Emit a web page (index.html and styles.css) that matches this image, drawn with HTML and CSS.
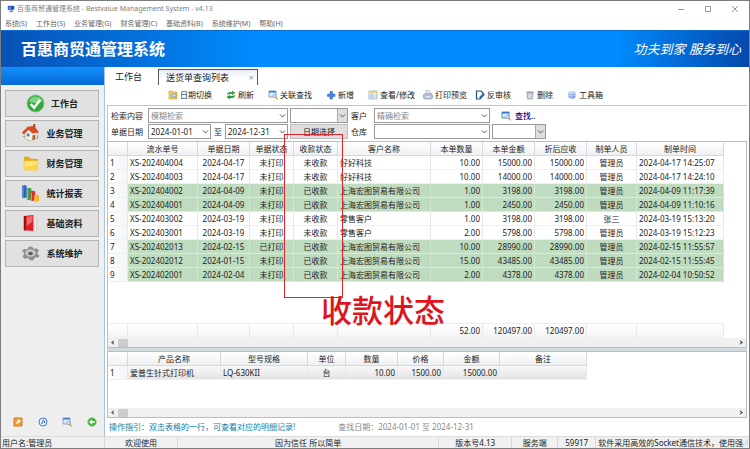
FILE: index.html
```
<!DOCTYPE html>
<html lang="zh-CN">

<head>
    <meta charset="UTF-8">
    <meta name="viewport" content="width=device-width, initial-scale=1.0">
    <title>百惠商贸通管理系统</title>
    <link rel="stylesheet" href="styles.css">
</head>

<body>
    <div class="window">
        <header class="titlebar">
            <svg class="app-icon" viewBox="0 0 10 10"><path d="M1 1h8v5H1z" fill="#1c4fb0"/><path d="M2 2h3v3H2z" fill="#5a96ea"/><path d="M4 6h3v2H4zM2 8h6v1H2z" fill="#8296b8"/></svg>
            <span class="window-title">百惠商贸通管理系统 - Bestvalue Management System - v4.13</span>
            <div class="window-buttons">
                <button type="button" aria-label="最小化"><svg viewBox="0 0 8 8"><path d="M1 4.500h6"/></svg></button>
                <button type="button" aria-label="最大化"><svg viewBox="0 0 8 8"><path d="M1.500 1.500h5v5h-5z"/></svg></button>
                <button type="button" aria-label="关闭"><svg viewBox="0 0 8 8"><path d="M1 1l6 6M7 1L1 7"/></svg></button>
            </div>
        </header>

        <nav class="menubar">
            <a href="#">系统(S)</a>
            <a href="#">工作台(S)</a>
            <a href="#">业务管理(G)</a>
            <a href="#">财务管理(C)</a>
            <a href="#">基础资料(B)</a>
            <a href="#">系统维护(M)</a>
            <a href="#">帮助(H)</a>
        </nav>

        <div class="banner">
            <h1>百惠商贸通管理系统</h1>
            <span class="slogan">功夫到家 服务到心</span>
        </div>

        <div class="body">
            <aside class="sidebar">
                <div class="sidebar-head"></div>
                <div class="nav-list">
                    <button type="button" class="nav-button">
                        <svg viewBox="0 0 20 20"><circle cx="10" cy="10" r="9" fill="#35a83e" stroke="#8bc58d"/><path d="M3 8a7.200 7 0 0 1 14 0q-7 3-14 0z" fill="#7dd27e"/><path d="M5 10.500l3.500 4L15 6" fill="none" stroke="#fff" stroke-width="2.600"/></svg>
                        <span>工作台</span>
                    </button>
                    <button type="button" class="nav-button">
                        <svg viewBox="0 0 20 20"><path d="M2 13l6 5 10-3v-3L9 10z" fill="#5f9f4b"/><path d="M4 9l5-4 8 4v6l-8 3-5-3z" fill="#f3eee6" stroke="#b9aa98" stroke-width=".5"/><path d="M1 9l6-6 7-1 5 7-7 1-4-4-5 5z" fill="#d94a1e"/><path d="M13 2V0h2v4z" fill="#9b3a20"/><path d="M6 10h3v3H6z" fill="#4582b8"/><path d="M12 12l3-1v5l-3 1z" fill="#a86436"/></svg>
                        <span>业务管理</span>
                    </button>
                    <button type="button" class="nav-button">
                        <svg viewBox="0 0 20 20"><path d="M3 4q0-1 1-1h5l1 2h7q1 0 1 1v10q0 1-1 1H4q-1 0-1-1z" fill="#e3ae1e"/><path d="M3 7h15v9q0 1-1 1H4q-1 0-1-1z" fill="#fbd449"/><path d="M4 8h13v3L4 14z" fill="#ffe57e"/></svg>
                        <span>财务管理</span>
                    </button>
                    <button type="button" class="nav-button">
                        <svg viewBox="0 0 20 20"><path d="M1 2l3-1 2 1v12l-3 1-2-1z" fill="#2f62c4"/><path d="M6 5l3-1 2 1v11l-3 1-2-1z" fill="#35a04a"/><path d="M10 8l3-1 2 1v9l-3 1-2-1z" fill="#d8332a"/><path d="M14 12l3-1 2 1v6l-3 1-2-1z" fill="#f1b62a"/><path d="M2 3v11M7 6v10M11 9v8M15 13v5" stroke="#fff" stroke-opacity=".45"/></svg>
                        <span>统计报表</span>
                    </button>
                    <button type="button" class="nav-button">
                        <svg viewBox="0 0 20 20"><path d="M13 3l4 1v14l-4 1z" fill="#cfcfcf"/><path d="M15 4v14" stroke="#fff"/><path d="M3 2l10-1v17l-10-1z" fill="#dc1f24"/><path d="M3 2l2 0v15.300L3 17z" fill="#8f1014"/><path d="M6 3l6-1v6l-6 5z" fill="#f06a68"/></svg>
                        <span>基础资料</span>
                    </button>
                    <button type="button" class="nav-button">
                        <svg viewBox="0 0 20 20"><path d="M8 3h4l.5 1.500 2 .8 2-.8 2.500 2.500-1.500 1.500V11l2 1-1.500 2.500-2.500-.5-1.500 1L13 17H9l-.5-1.500-2-.8-2.500 1L1.500 13 3 11.500V9L1 7.500 3.500 5l2 .8L7.500 4.500z" fill="#8d8d8d"/><ellipse cx="10" cy="9.500" rx="5.500" ry="4" fill="#c6c6c6"/><ellipse cx="10" cy="10" rx="2.500" ry="1.800" fill="#5d5d5d"/></svg>
                        <span>系统维护</span>
                    </button>
                </div>
                <div class="quick-links">
                    <button type="button" aria-label="编辑"><svg viewBox="0 0 10 10"><path d="M1 1h8v8H1z" fill="#f0a03a" stroke="#cf7a1a"/><path d="M3 7l1-3 2-2 2 2-2 2z" fill="#fff3d8"/></svg></button>
                    <button type="button" aria-label="帮助"><svg viewBox="0 0 10 10"><circle cx="5" cy="5" r="4" fill="#e8f0fc" stroke="#4a7cd0"/><path d="M5.500 2.500L4.500 5 3.500 7M6.500 4v2" fill="none" stroke="#2a5cb8"/></svg></button>
                    <button type="button" aria-label="查找"><svg viewBox="0 0 10 10"><path d="M1 1h7v6H1z" fill="#dcebfb" stroke="#7fa6d4"/><path d="M1 1h7v1.500H1z" fill="#3f7fd0"/><circle cx="6.500" cy="6" r="1.500" fill="#fff" stroke="#5d8fbe" stroke-width=".7"/><path d="M7.600 7.200L9.500 9.300" stroke="#c98332" stroke-width="1.200"/></svg></button>
                    <button type="button" aria-label="退出"><svg viewBox="0 0 10 10"><circle cx="5" cy="5" r="4.300" fill="#44b83c" stroke="#6fc768" stroke-width=".6"/><path d="M2 5l3-2.500V4h2.500v2H5v1.500z" fill="#fff"/></svg></button>
                </div>
            </aside>

            <main class="workspace">
                <div class="tabs">
                    <a href="#" class="tab">工作台</a>
                    <a href="#" class="tab active">送货单查询列表<span class="tab-close">×</span></a>
                </div>

                <div class="toolbar">
                    <button type="button"><svg viewBox="0 0 10 10"><path d="M1 1h3l1 1h4v7H1z" fill="#f3cb52" stroke="#d0a030" stroke-width=".6"/><path d="M4 4h4v3H4z" fill="#cfe2f7" stroke="#6f93bd" stroke-width=".7"/></svg>日期切换</button>
                    <button type="button"><svg viewBox="0 0 10 10"><path d="M1 5q0-3 3.500-3H6V.5L9.500 3 6 5.200V4H4.500Q3 4 1 5z" fill="#3da84a"/><path d="M9 5q0 3-3.500 3H4v1.500L.5 7 4 4.800V6h1.500Q7 6 9 5z" fill="#2f9440"/></svg>刷新</button>
                    <button type="button"><svg viewBox="0 0 10 10"><path d="M1 1h7v6H1z" fill="#dcebfb" stroke="#7fa6d4"/><path d="M1 1h7v1.500H1z" fill="#3f7fd0"/><circle cx="6.500" cy="6" r="1.500" fill="#fff" stroke="#5d8fbe" stroke-width=".7"/><path d="M7.600 7.200L9.500 9.300" stroke="#c98332" stroke-width="1.200"/></svg>关联查找</button>
                    <button type="button"><svg viewBox="0 0 10 10"><path d="M4 1.500h2.500V4H9v2.500H6.500V9H4V6.500H1.500V4H4z" fill="#4a86dd" stroke="#2c62b8" stroke-width=".5"/></svg>新增</button>
                    <div class="tool-group">
                        <button type="button"><svg viewBox="0 0 10 10"><path d="M1 1h8v8H1z" fill="#fff" stroke="#8aa9cf" stroke-width=".8"/><path d="M1 1h8v2H1z" fill="#f1cd68"/><path d="M1 5h8M1 7h8M4 3v6" stroke="#8aa9cf" stroke-width=".7"/></svg>查看/修改</button>
                        <button type="button"><svg viewBox="0 0 10 10"><path d="M3 .5l4 .5v4H3z" fill="#f5f9ff" stroke="#8ca1bd" stroke-width=".6"/><path d="M.5 5l2-1.500h6l1 2V8l-2 1H2L.5 8z" fill="#b3bfd1" stroke="#7c8ba3" stroke-width=".6"/><path d="M2.500 7h5" stroke="#fff"/></svg>打印预览</button>
                        <button type="button"><svg viewBox="0 0 10 10"><path d="M1.500 1H6l2 2v2L5 9H1.500z" fill="#fff" stroke="#234b74" stroke-width="1.200"/><path d="M4.500 7.500L8 3.500l1.500 1L6 8.500z" fill="#2d72b5" stroke="#183b63" stroke-width=".5"/></svg>反审核</button>
                    </div>
                    <button type="button"><svg viewBox="0 0 10 10"><path d="M2 2.500h6L7.500 9h-5z" fill="#c4c5d0" stroke="#888b9c" stroke-width=".6"/><path d="M1.500 1.500h7v1.500h-7z" fill="#9a9cab"/><path d="M4 4v4M6 4v4" stroke="#eef" stroke-width=".8"/></svg>删除</button>
                    <button type="button"><svg viewBox="0 0 10 10"><path d="M1.500 2.500v5q3.500 2.500 7 0v-5z" fill="#7ba3e4"/><ellipse cx="5" cy="2.500" rx="3.500" ry="1.500" fill="#c3d8f8"/><path d="M1.500 5q3.500 2 7 0M4 4v4" fill="none" stroke="#dbe8fb" stroke-width=".7"/></svg>工具箱</button>
                </div>

                <form class="filters">
                    <label for="keyword">检索内容</label>
                    <select id="keyword" class="wide placeholder"><option>模糊检索</option></select>
                    <select class="gray-arrow" aria-label="检索字段"><option></option></select>
                    <label for="customer">客户</label>
                    <select id="customer" class="placeholder"><option>精确检索</option></select>
                    <button type="button" class="find-button"><svg viewBox="0 0 10 10"><path d="M1 1h7v6H1z" fill="#dcebfb" stroke="#4f8dd0"/><path d="M1 1h7v1.500H1z" fill="#2f73cc"/><circle cx="6.500" cy="6" r="1.500" fill="#fff" stroke="#5d8fbe" stroke-width=".7"/><path d="M7.600 7.200L9.500 9.300" stroke="#c98332" stroke-width="1.200"/></svg>查找..</button>

                    <label for="dateFrom">单据日期</label>
                    <select id="dateFrom"><option>2024-01-01</option></select>
                    <label for="dateTo">至</label>
                    <select id="dateTo"><option>2024-12-31</option></select>
                    <button type="button" class="date-button">日期选择</button>
                    <label for="store">仓库</label>
                    <select id="store"><option></option></select>
                    <select class="gray-arrow" aria-label="仓库字段"><option></option></select>
                </form>

                <section class="grid orders">
                    <div class="grid-body">
                        <table>
                            <colgroup><col class="c-no"><col class="c-code"><col class="c-num"><col class="c-state"><col class="c-state"><col class="c-name"><col class="c-num"><col class="c-num"><col class="c-num"><col class="c-user"><col class="c-time"></colgroup>
                            <thead>
                                <tr><th></th><th>流水单号</th><th>单据日期</th><th>单据状态</th><th>收款状态</th><th>客户名称</th><th>本单数量</th><th>本单金额</th><th>折后应收</th><th>制单人员</th><th>制单时间</th></tr>
                            </thead>
                            <tbody>
                                <tr><td>1</td><td>XS-202404004</td><td class="mid">2024-04-17</td><td class="mid">未打印</td><td class="mid">未收款</td><td>好好科技</td><td class="num">10.00</td><td class="num">15000.00</td><td class="num">15000.00</td><td class="mid">管理员</td><td>2024-04-17 14:25:07</td></tr>
                                <tr><td>2</td><td>XS-202404003</td><td class="mid">2024-04-17</td><td class="mid">未打印</td><td class="mid">未收款</td><td>好好科技</td><td class="num">10.00</td><td class="num">14000.00</td><td class="num">14000.00</td><td class="mid">管理员</td><td>2024-04-17 14:24:10</td></tr>
                                <tr class="paid"><td>3</td><td>XS-202404002</td><td class="mid">2024-04-09</td><td class="mid">未打印</td><td class="mid">已收款</td><td>上海宏图贸易有限公司</td><td class="num">1.00</td><td class="num">3198.00</td><td class="num">3198.00</td><td class="mid">管理员</td><td>2024-04-09 11:17:39</td></tr>
                                <tr class="paid"><td>4</td><td>XS-202404001</td><td class="mid">2024-04-09</td><td class="mid">未打印</td><td class="mid">已收款</td><td>上海宏图贸易有限公司</td><td class="num">1.00</td><td class="num">2450.00</td><td class="num">2450.00</td><td class="mid">管理员</td><td>2024-04-09 11:10:16</td></tr>
                                <tr><td>5</td><td>XS-202403002</td><td class="mid">2024-03-19</td><td class="mid">未打印</td><td class="mid">未收款</td><td>零售客户</td><td class="num">1.00</td><td class="num">3198.00</td><td class="num">3198.00</td><td class="mid">张三</td><td>2024-03-19 15:13:20</td></tr>
                                <tr><td>6</td><td>XS-202403001</td><td class="mid">2024-03-19</td><td class="mid">未打印</td><td class="mid">未收款</td><td>零售客户</td><td class="num">2.00</td><td class="num">5798.00</td><td class="num">5798.00</td><td class="mid">管理员</td><td>2024-03-19 15:12:23</td></tr>
                                <tr class="paid"><td>7</td><td>XS-202402013</td><td class="mid">2024-02-15</td><td class="mid">已打印</td><td class="mid">已收款</td><td>上海宏图贸易有限公司</td><td class="num">10.00</td><td class="num">28990.00</td><td class="num">28990.00</td><td class="mid">管理员</td><td>2024-02-15 11:55:57</td></tr>
                                <tr class="paid"><td>8</td><td>XS-202402012</td><td class="mid">2024-01-15</td><td class="mid">未打印</td><td class="mid">已收款</td><td>上海宏图贸易有限公司</td><td class="num">15.00</td><td class="num">43485.00</td><td class="num">43485.00</td><td class="mid">管理员</td><td>2024-02-15 11:55:45</td></tr>
                                <tr class="paid"><td>9</td><td>XS-202402001</td><td class="mid">2024-02-04</td><td class="mid">未打印</td><td class="mid">已收款</td><td>上海宏图贸易有限公司</td><td class="num">2.00</td><td class="num">4378.00</td><td class="num">4378.00</td><td class="mid">管理员</td><td>2024-02-04 10:50:52</td></tr>
                            </tbody>
                        </table>
                    </div>
                    <table class="totals">
                        <colgroup><col class="c-no"><col class="c-code"><col class="c-num"><col class="c-state"><col class="c-state"><col class="c-name"><col class="c-num"><col class="c-num"><col class="c-num"><col class="c-user"><col class="c-time"></colgroup>
                        <tbody>
                            <tr><td></td><td></td><td></td><td></td><td></td><td></td><td class="num">52.00</td><td class="num">120497.00</td><td class="num">120497.00</td><td></td><td></td></tr>
                        </tbody>
                    </table>
                    <div class="scrollbar"><span class="arrow"></span><span class="thumb"></span><span class="arrow right"></span></div>
                    <div class="mark-box"></div>
                    <div class="mark-text">收款状态</div>
                </section>

                <section class="grid items">
                    <div class="grid-body">
                        <table>
                            <colgroup><col class="c-no"><col class="c-name"><col class="c-time"><col class="c-unit"><col class="c-num"><col class="c-price"><col class="c-sum"><col class="c-time"></colgroup>
                            <thead>
                                <tr><th></th><th>产品名称</th><th>型号规格</th><th>单位</th><th>数量</th><th>价格</th><th>金额</th><th>备注</th></tr>
                            </thead>
                            <tbody>
                                <tr class="selected"><td>1</td><td>爱普生针式打印机</td><td>LQ-630KII</td><td class="mid">台</td><td class="num">10.00</td><td class="num">1500.00</td><td class="num">15000.00</td><td></td></tr>
                            </tbody>
                        </table>
                    </div>
                    <div class="scrollbar"><span class="arrow"></span><span class="thumb"></span><span class="arrow right"></span></div>
                </section>

                <div class="hint">
                    <span class="guide">操作指引：双击表格的一行，可查看对应的明细记录!</span>
                    <span class="range">查找日期：2024-01-01 至 2024-12-31</span>
                </div>
            </main>
        </div>

        <footer class="statusbar">
            <span class="st-user">用户名:管理员</span>
            <span class="st-welcome">欢迎使用</span>
            <span class="st-slogan">因为信任 所以简单</span>
            <span class="st-version">版本号4.13</span>
            <span class="st-server">服务端</span>
            <span class="st-port">59917</span>
            <span class="st-note">软件采用高效的Socket通信技术，使用强</span>
            <svg class="grip" viewBox="0 0 6 8"><path d="M4 2h1v1H4zM4 4h1v1H4zM2 4h1v1H2zM4 6h1v1H4zM2 6h1v1H2zM0 6h1v1H0z" fill="#b5b5b5"/></svg>
        </footer>
    </div>
</body>

</html>
```

FILE: styles.css
```
* {
    margin: 0;
    padding: 0;
    box-sizing: border-box;
}

body {
    font-family: "Noto Sans", "Noto Sans CJK SC", sans-serif;
    font-size: 8px;
    line-height: 12px;
    color: #222;
    background-color: #fff;
}

button,
select {
    font: inherit;
    color: inherit;
}

button {
    border: none;
    background: none;
    white-space: nowrap;
}

a {
    color: inherit;
    text-decoration: none;
}

.window {
    display: flex;
    flex-direction: column;
    height: 100vh;
    border: 1px solid #7d7d7d;
    overflow: hidden;
}

/* title and menu */
.titlebar {
    display: flex;
    align-items: center;
    height: 16px;
    padding: 0 10px 0 6px;
    font-size: 7px;
    color: #808080;
}

.app-icon {
    width: 8px;
    height: 8px;
    margin-right: 2px;
}

.window-title {
    flex: 1;
}

.window-buttons {
    display: flex;
    gap: 19px;
}

.window-buttons button,
.window-buttons svg {
    display: block;
    width: 8px;
    height: 8px;
}

.window-buttons svg {
    fill: none;
    stroke: #999;
    stroke-width: 1;
}

.menubar {
    display: flex;
    gap: 9px;
    height: 13px;
    padding: 0 4px;
    font-size: 7px;
    line-height: 14px;
    color: #666;
}

.banner {
    display: flex;
    align-items: center;
    justify-content: space-between;
    height: 37px;
    padding: 0 8px 0 20px;
    background: linear-gradient(to right, #0752b5, #008cff 35%, #008cff 82%, #0548ac);
    border-top: 1px solid #0a6cd0;
    color: #fff;
}

.banner h1 {
    font-size: 16px;
    line-height: 24px;
}

.slogan {
    font-size: 13px;
    line-height: 20px;
    font-style: italic;
}

/* sidebar */
.body {
    display: flex;
    flex: 1;
    min-height: 0;
}

.sidebar {
    display: flex;
    flex-direction: column;
    width: 104px;
    background-color: #efefef;
    border-right: 1px solid #a9c3e2;
}

.sidebar-head {
    height: 18px;
    background: linear-gradient(#1490ff, #0468d6);
}

.nav-list {
    display: flex;
    flex-direction: column;
    gap: 3px;
    padding: 5px 5px 0 4px;
}

.nav-button {
    display: flex;
    align-items: center;
    justify-content: center;
    gap: 6px;
    height: 27px;
    background-color: #e1e1e1;
    border: 1px solid #b4b4b4;
    font-size: 9px;
    font-weight: bold;
}

.nav-button svg {
    width: 19px;
    height: 19px;
}

.quick-links {
    display: flex;
    justify-content: space-between;
    margin-top: auto;
    padding: 0 7px 9px 12px;
}

.quick-links svg {
    display: block;
    width: 10px;
    height: 10px;
}

/* workspace */
.workspace {
    display: flex;
    flex-direction: column;
    flex: 1;
    min-width: 0;
    padding: 0 2px;
}

.tabs {
    display: flex;
    height: 18px;
    padding-top: 2px;
    font-size: 9px;
    line-height: 16px;
}

.tab {
    width: 51px;
    padding-left: 8px;
}

.tab.active {
    display: flex;
    justify-content: space-between;
    width: 100px;
    padding-left: 7px;
    padding-right: 3px;
    background: linear-gradient(#e8ebf8, #fff 60%);
    border: 1px solid #555;
    border-bottom: none;
}

.tab-close {
    color: #999;
}

.toolbar {
    display: flex;
    align-items: center;
    gap: 14px;
    height: 21px;
    padding-left: 61px;
    border-bottom: 1px solid #c4c4c4;
}

.tool-group {
    display: flex;
    gap: 8px;
}

.toolbar button,
.find-button {
    display: flex;
    align-items: center;
    gap: 2px;
}

.toolbar svg,
.find-button svg {
    width: 10px;
    height: 10px;
}

.filters {
    display: grid;
    grid-template-columns: 36px 63px 10px 63px 58px 22px 116px 54px;
    grid-auto-rows: 15px;
    column-gap: 2px;
    row-gap: 1px;
    align-items: stretch;
    padding: 2px 0 2px 2px;
    border-left: 1px solid #c4c4c4;
}

.filters label {
    padding-left: 1px;
    line-height: 15px;
    white-space: nowrap;
}

.filters .wide {
    grid-column: span 3;
}

.filters select {
    appearance: none;
    width: 100%;
    padding: 0 2px;
    border: 1px solid #999;
    border-radius: 0;
    background: #fff url("data:image/svg+xml,%3Csvg xmlns='http://www.w3.org/2000/svg' width='9' height='13' viewBox='0 0 9 13'%3E%3Cpath d='M2 5.500l2.500 2.500L7 5.500' fill='none' stroke='%23555'/%3E%3C/svg%3E") no-repeat right center;
}

.filters .gray-arrow {
    background-image: url("data:image/svg+xml,%3Csvg xmlns='http://www.w3.org/2000/svg' width='10' height='13' viewBox='0 0 10 13'%3E%3Cpath d='M0 0h10v13H0z' fill='%23dedede'/%3E%3Cpath d='M.5 0v13' stroke='%23aaa'/%3E%3Cpath d='M3 5.500l2.500 2.500L8 5.500' fill='none' stroke='%23555'/%3E%3C/svg%3E");
}

.filters .placeholder {
    color: #888;
}

.find-button {
    gap: 4px;
    padding-left: 9px;
    color: #00008b;
    font-weight: 500;
}

.date-button {
    background-color: #dedede;
    border: 1px solid #bdbdbd;
}

/* data grids */
.grid {
    display: flex;
    flex-direction: column;
    border: 1px solid #b5bfc6;
    background-color: #fff;
}

.orders {
    position: relative;
    flex: 1;
    min-height: 0;
}

.items {
    height: 67px;
    margin-top: 3px;
    box-shadow: 0 -3px 0 #d3dade;
}

.grid-body {
    flex: 1;
    min-height: 0;
}

table {
    table-layout: fixed;
    width: 0;
    border-collapse: separate;
    border-spacing: 0;
}

.c-no {
    width: 20px;
}

.c-code {
    width: 70px;
}

.c-num {
    width: 52px;
}

.c-state {
    width: 44px;
}

.c-name {
    width: 93px;
}

.c-user {
    width: 50px;
}

.c-time {
    width: 87px;
}

.c-unit {
    width: 38px;
}

.c-price {
    width: 46px;
}

.c-sum {
    width: 56px;
}

th,
td {
    height: 14px;
    padding: 0 2px;
    line-height: 13px;
    white-space: nowrap;
    border-right: 1px solid #e6e9ec;
    border-bottom: 1px solid #eef0f2;
}

th {
    font-weight: normal;
    text-align: center;
    background: linear-gradient(#fff, #eef0f2);
    border-color: #d5d9dd;
}

td {
    text-align: left;
}

td:first-child {
    background: linear-gradient(to right, #fff, #f3f5f7);
}

.paid td:not(:first-child) {
    background-color: #c0dcc0;
    border-right-color: #d3e8d3;
    border-bottom-color: #d9ecd9;
}

.selected td:not(:first-child) {
    background: linear-gradient(#f8f8f8, #e4e4e4);
}

.totals td {
    height: 15px;
    background: linear-gradient(#fff, #f4f4f6);
    border-top: 1px solid #eceef0;
}

td.mid {
    text-align: center;
}

td.num {
    text-align: right;
}

.scrollbar {
    display: flex;
    align-items: center;
    height: 9px;
    background-color: #f0f0f0;
}

.arrow {
    width: 3px;
    height: 3px;
    margin: 0 3px 0 4px;
    border-left: 1px solid #333;
    border-bottom: 1px solid #333;
    transform: rotate(45deg);
}

.arrow.right {
    margin: 0 4px 0 auto;
    transform: rotate(225deg);
}

.thumb {
    width: 10px;
    height: 8px;
    background-color: #cdcdcd;
}

/* red callout over the receipt status column */
.mark-box {
    position: absolute;
    top: -8px;
    left: 176px;
    width: 59px;
    height: 164px;
    border: 1px solid #d8262c;
}

.mark-text {
    position: absolute;
    top: 148px;
    left: 213px;
    font-size: 31px;
    line-height: 40px;
    font-weight: 500;
    color: #e0141c;
    white-space: nowrap;
}

.hint {
    display: flex;
    gap: 43px;
    height: 18px;
    padding-left: 2px;
    line-height: 17px;
}

.guide {
    color: #0a7fa8;
}

.range {
    color: #888;
}

/* status bar */
.statusbar {
    display: flex;
    height: 12px;
    background-color: #f0f0f0;
    border-top: 1px solid #dcdcdc;
    line-height: 11px;
    white-space: nowrap;
}

.statusbar span {
    border-right: 1px solid #d8d8d8;
    text-align: center;
}

.statusbar .st-user {
    width: 104px;
    padding-left: 1px;
    text-align: left;
}

.st-welcome {
    width: 73px;
}

.st-slogan {
    flex: 1;
}

.st-version {
    width: 73px;
}

.st-server {
    width: 46px;
}

.st-port {
    width: 38px;
}

.statusbar .st-note {
    padding-left: 2px;
    border-right: none;
    text-align: left;
}

.grip {
    width: 6px;
    height: 10px;
}
```
